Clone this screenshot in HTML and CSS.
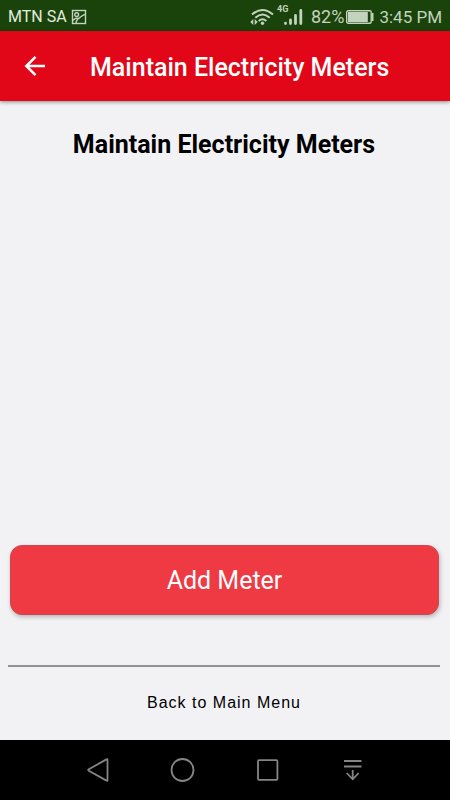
FILE: index.html
```html
<!DOCTYPE html>
<html lang="en">
<head>
<meta charset="utf-8">
<meta name="viewport" content="width=device-width, initial-scale=1">
<title>Maintain Electricity Meters</title>
<link rel="stylesheet" href="styles.css">
</head>
<body>
<div class="status">
  <span class="carrier">MTN SA</span>
  <svg class="picture" width="16" height="16" viewBox="0 0 16 16" fill="none" stroke="currentColor" stroke-width="1.4" aria-hidden="true">
    <rect x="1.500" y="1.500" width="13" height="13"/><circle cx="5.700" cy="5.600" r="1.900"/><path d="M2 11.500q2-2.500 4.500-2.500M5 14.400c0-4 3-5.400 4.500-6.400S11.500 6 14 5.500"/>
  </svg>
  <svg class="wifi" width="24" height="18" viewBox="0 0 24 18" fill="none" stroke="currentColor" stroke-width="2" aria-hidden="true">
    <path d="M2 6.500Q12.500-2.500 23 6.500M5.300 9.800Q12.500 3.300 19.700 9.800M8.700 13Q12.500 9.500 16.300 13"/>
    <circle cx="12.500" cy="15.200" r="1.700" fill="currentColor" stroke="none"/>
    <path d="M3.300 11v6L.3 14zM4.700 11v6l3-3z" fill="currentColor" stroke="none"/>
  </svg>
  <span class="signal">
    <svg width="20" height="18" viewBox="0 0 20 18" fill="none" stroke="currentColor" stroke-width="2.800" stroke-linecap="round" aria-hidden="true">
      <path d="M2.500 15.200v.3M7.500 12v3.500M12.500 7.500v8M17.800 2.500v13"/>
    </svg>
    <span class="network">4G</span>
  </span>
  <span class="percent">82%</span>
  <svg class="battery" width="28" height="14" viewBox="0 0 28 14" fill="none" stroke="currentColor" aria-hidden="true">
    <rect x=".7" y=".7" width="24.500" height="12.600" rx="1.500" stroke-width="1.400"/>
    <rect x="2" y="2" width="19.800" height="10" fill="currentColor" stroke="none"/>
    <path d="M26.500 3v8" stroke-width="2"/>
  </svg>
  <time class="clock">3:45 PM</time>
</div>
<header class="appbar">
  <button class="back" type="button" aria-label="Back">
    <svg width="22" height="22" viewBox="0 0 22 22" fill="none" stroke="currentColor" stroke-width="2.500" aria-hidden="true"><path d="M21 11H3M11.500 1.800L2.300 11l9.200 9.200"/></svg>
  </button>
  <span class="title">Maintain Electricity Meters</span>
</header>
<main class="page">
  <h1 class="heading">Maintain Electricity Meters</h1>
  <button class="add" type="button">Add Meter</button>
  <footer class="footer"><a class="menu-link" href="#">Back to Main Menu</a></footer>
</main>
<nav class="navbar" aria-label="System">
  <button type="button" aria-label="Back"><svg width="26" height="26" viewBox="0 0 26 26"><path d="M22.500 3v20.200Q22.500 24.200 21.500 23.600L3.800 13.800Q2.500 13 3.800 12.200L21.500 2.400Q22.500 1.800 22.500 2.800z"/></svg></button>
  <button type="button" aria-label="Home"><svg width="26" height="26" viewBox="0 0 26 26"><circle cx="12.500" cy="13" r="11"/></svg></button>
  <button type="button" aria-label="Recent apps"><svg width="26" height="26" viewBox="0 0 26 26"><rect x="3" y="3.200" width="19.400" height="19.600" rx="1"/></svg></button>
  <button type="button" aria-label="Notifications"><svg width="26" height="26" viewBox="0 0 26 26"><path d="M4 4h17.500M4 9.500h17.500M12.700 13v9.300M6.700 16l6 6.300 6-6.300"/></svg></button>
</nav>
</body>
</html>
```

FILE: styles.css
```css
* {
  box-sizing: border-box;
}

body {
  margin: 0;
  min-height: 100vh;
  display: flex;
  flex-direction: column;
  background: #f2f2f5;
  color: #000;
  font-family: Roboto, sans-serif;
}

button {
  display: flex;
  align-items: center;
  justify-content: center;
  padding: 0;
  border: 0;
  background: none;
  color: inherit;
  font: inherit;
}

svg {
  display: block;
  flex: none;
}

.status {
  display: flex;
  align-items: center;
  height: 31px;
  padding: 2px 8px 0;
  background: #1a430c;
  color: #c3d3bd;
  font-size: 17px;
  line-height: 20px;
  white-space: nowrap;
}

.carrier {
  color: #e3ebdf;
  font-size: 16px;
}

.picture {
  margin-left: 4px;
}

.wifi {
  margin-left: auto;
}

.signal {
  position: relative;
  margin-left: 9px;
}

.network {
  position: absolute;
  top: -4px;
  left: -6px;
  font-size: 9px;
  font-weight: 700;
  line-height: 10px;
}

.percent {
  margin-left: 8px;
  font-size: 18px;
}

.battery {
  margin-left: 2px;
}

.clock {
  margin-left: 5px;
}

.appbar {
  position: relative;
  display: flex;
  align-items: center;
  height: 70px;
  padding: 0 24px;
  background: #e10718;
  color: #fff;
  box-shadow: 0 1px 4px rgba(0, 0, 0, 0.45);
}

.title {
  margin-left: 44px;
  padding-top: 3px;
  font-size: 25px;
  font-weight: 500;
  line-height: 32px;
  white-space: nowrap;
}

.page {
  flex: 1;
  display: flex;
  flex-direction: column;
  padding: 0 10px 0 8px;
}

.heading {
  margin: 28px 0 auto;
  font-size: 25px;
  font-weight: 700;
  line-height: 32px;
  text-align: center;
}

.add {
  height: 70px;
  margin: 0 1px 50px 2px;
  border: 1px solid #c64a52;
  border-radius: 12px;
  background: #ef3a43;
  color: #fff;
  font-size: 25px;
  box-shadow: 1px 2px 4px rgba(0, 0, 0, 0.25);
}

.footer {
  height: 75px;
  padding-top: 26px;
  border-top: 2px solid #92928f;
  text-align: center;
}

.menu-link {
  color: #000;
  font-family: "Liberation Sans", Arial, sans-serif;
  font-size: 16px;
  line-height: 20px;
  letter-spacing: 1px;
  text-decoration: none;
}

.navbar {
  display: grid;
  grid-template-columns: repeat(4, 1fr);
  height: 60px;
  padding: 0 55px;
  background: #000;
  color: #858585;
}

.navbar svg {
  fill: none;
  stroke: currentColor;
  stroke-width: 1.8;
}
```
